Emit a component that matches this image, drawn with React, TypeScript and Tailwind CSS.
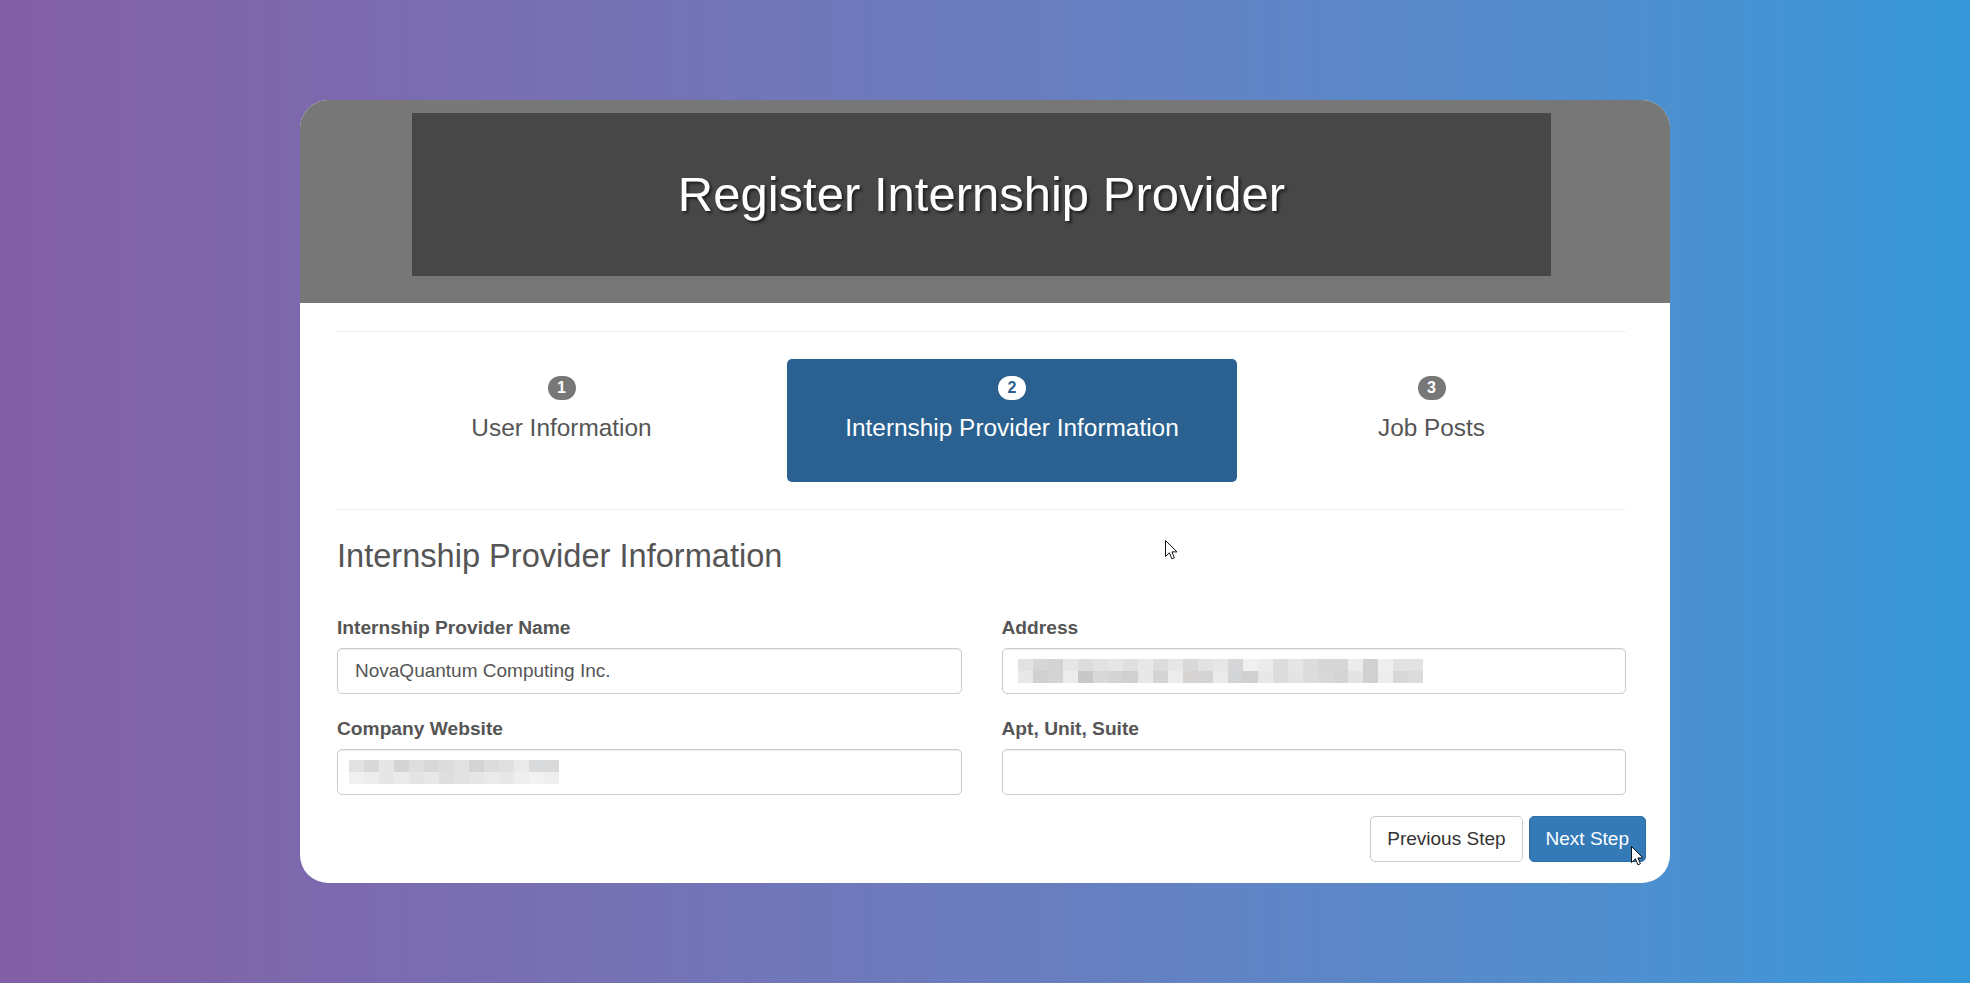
const addressTop = ["#e2e2e2","#d6d6d6","#d4d2d2","#e4e6e8","#dcdcdc","#e2e2e2","#e6e6e6","#e0e0e0","#e8e8e8","#dcdcdc","#e6e6e6","#d8d8d8","#e2e2e2","#e8e6e4","#d6d6d8","#f0f0f0","#ececec","#dcdcdc","#e6e6e6","#dcdcdc","#d6d6d6","#d6d6d6","#ececec","#d0d0d0","#eeeeee","#e2e2e2","#e2e2e2"];
const addressBottom = ["#e8e8e8","#d0d0d0","#d4d4d4","#ececec","#c8c8c8","#d8d8d8","#d4d4d4","#d0d0d0","#e8e8e8","#d4d4d4","#ececec","#d8d4d4","#d4d4d4","#eaeaea","#d2d4d6","#d0d0d0","#e8e8e8","#dcdcdc","#e4e4e4","#dcdcdc","#d8d8d8","#d4d4d4","#e4e4e4","#d0d0d0","#ececec","#d8d8d8","#dcdcdc"];
const siteTop = ["#e2e2e2","#d8d8d8","#e6e6e6","#d4d4d4","#dedede","#d8d8d8","#dcdcdc","#e2e2e2","#d4d4d4","#dcdcdc","#e0e0e0","#eaeaea","#d8dadc","#dadada"];
const siteBottom = ["#f0f0f0","#ececec","#e6e6e6","#eaeaea","#e4e4e4","#e8e8e8","#dedede","#e2e2e2","#e6e6e6","#eaeaea","#e8e8e8","#eeeeee","#f2f2f2","#eeeeee"];

const Mosaic = ({ rows }: { rows: string[][] }) => (
  <div className="flex flex-col">
    {rows.map((row, i) => (
      <div key={i} className="flex">
        {row.map((c, j) => (
          <div key={j} className="h-[12px] w-[15px]" style={{ backgroundColor: c }} />
        ))}
      </div>
    ))}
  </div>
);

const Cursor = ({ className }: { className: string }) => (
  <svg className={className} width="13" height="20" viewBox="0 0 13 20">
    <path
      d="M0.5 0.5 L0.5 16.5 L4.4 12.8 L6.9 18.8 L9.4 17.8 L6.9 11.9 L12 11.9 Z"
      fill="#fff"
      stroke="#111"
      strokeWidth="1"
      strokeLinejoin="round"
    />
  </svg>
);

const steps = [
  { n: 1, label: "User Information", width: "w-[451px]" },
  { n: 2, label: "Internship Provider Information", width: "w-[450px]", active: true },
  { n: 3, label: "Job Posts", width: "flex-1" },
];

const Field = ({ label, children }: { label: string; children?: React.ReactNode }) => (
  <div>
    <div className="mb-[7px] text-[19.2px] leading-[27px] font-bold text-[#555]">{label}</div>
    <div className="flex h-[46px] items-center rounded-[5px] border border-[#ccc] bg-white pl-[17px] text-[19px] text-[#555] shadow-[inset_0_1px_1px_rgba(0,0,0,0.075)]">
      {children}
    </div>
  </div>
);

const App = () => {
  return (
    <div className="relative min-h-[983px] w-full bg-gradient-to-r from-[#835fa5] to-[#3498d8] pt-[100px] font-['Liberation_Sans',Arial,sans-serif]">
      <div className="mx-auto w-[1370px] overflow-hidden rounded-[28px] bg-white">
        <div className="bg-[#777] pt-[13px] pb-[27px]">
          <div className="ml-[112px] flex h-[163px] w-[1139px] items-center justify-center bg-[#474747]">
            <h1 className="text-[49px] leading-none text-white [text-shadow:2px_2px_3px_rgba(0,0,0,0.6)]">
              Register Internship Provider
            </h1>
          </div>
        </div>

        <div className="pt-[28px] pr-[44px] pb-[21px] pl-[36px]">
          <div className="h-px bg-[#eee]" />

          <div className="mt-[27px] mb-[27px] flex">
            {steps.map((s) => (
              <div
                key={s.n}
                className={`${s.width} flex h-[123px] flex-col items-center pt-[17px] ${
                  s.active ? "rounded-[5px] bg-[#2a6190] text-white" : "text-[#555]"
                }`}
              >
                <span
                  className={`flex h-[24px] w-[28px] items-center justify-center rounded-full text-[16px] font-bold ${
                    s.active ? "bg-white text-[#2a6190]" : "bg-[#777] text-white"
                  }`}
                >
                  {s.n}
                </span>
                <span className="mt-[10px] text-[24.4px] leading-[35px]">{s.label}</span>
              </div>
            ))}
          </div>

          <div className="h-px bg-[#eee]" />

          <h3 className="mt-[28px] pl-px text-[32.6px] leading-[35px] text-[#555]">Internship Provider Information</h3>

          <div className="mt-[41px] grid grid-cols-2 gap-x-[40px] gap-y-[21px] pl-px">
            <Field label="Internship Provider Name">NovaQuantum Computing Inc.</Field>
            <Field label="Address">
              <div className="-ml-[2px]">
                <Mosaic rows={[addressTop, addressBottom]} />
              </div>
            </Field>
            <Field label="Company Website">
              <div className="-ml-[6px]">
                <Mosaic rows={[siteTop, siteBottom]} />
              </div>
            </Field>
            <Field label="Apt, Unit, Suite" />
          </div>

          <div className="mt-[21px] -mr-[20px] flex justify-end gap-[6px]">
            <button className="h-[46px] rounded-[5px] border border-[#ccc] bg-white px-[16px] text-[19px] text-[#333]">
              Previous Step
            </button>
            <button className="h-[46px] rounded-[5px] border border-[#2e6da4] bg-[#337ab7] px-[16px] text-[19px] text-white">
              Next Step
            </button>
          </div>
        </div>
      </div>

      <Cursor className="absolute top-[540px] left-[1165px]" />
      <Cursor className="absolute top-[846px] left-[1631px]" />
    </div>
  );
};

export default App;
